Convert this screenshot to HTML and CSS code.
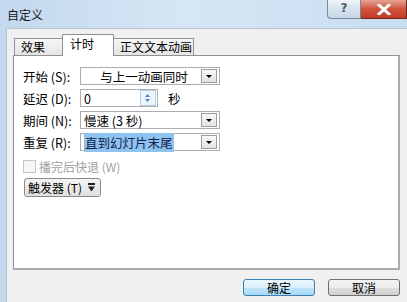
FILE: index.html
```html
<!DOCTYPE html>
<html lang="zh-CN">
<head>
    <meta charset="UTF-8">
    <title>自定义</title>
    <link rel="stylesheet" href="styles.css">
</head>
<body>
    <div class="window">
        <div class="titlebar">
            <span class="title">自定义</span>
            <div class="caption-btns">
                <div class="cap-help">?</div>
                <div class="cap-close">
                    <svg width="14" height="11" viewBox="0 0 14 11"><path d="M2 1 L12 10 M12 1 L2 10" stroke="#fff" stroke-width="3" stroke-linecap="square"/></svg>
                </div>
            </div>
        </div>
        <div class="client">
            <div class="tabs">
                <div class="tab t1">效果</div>
                <div class="tab active">计时</div>
                <div class="tab t3">正文文本动画</div>
            </div>
            <div class="panel">
                <div class="form">
                    <label>开始 (S):</label>
                    <div class="combo">
                        <span class="val center">与上一动画同时</span>
                        <span class="drop"><i></i></span>
                    </div>

                    <label>延迟 (D):</label>
                    <div class="spin-row">
                        <div class="spin">
                            <span class="val">0</span>
                            <span class="arrows">
                                <svg width="13" height="14" viewBox="0 0 13 14"><path d="M4 6 L6.5 3 L9 6 Z M4 8 L6.5 11 L9 8 Z" fill="#4f86c6"/></svg>
                            </span>
                        </div>
                        <span class="unit">秒</span>
                    </div>

                    <label>期间 (N):</label>
                    <div class="combo">
                        <span class="val">慢速 (3 秒)</span>
                        <span class="drop"><i></i></span>
                    </div>

                    <label>重复 (R):</label>
                    <div class="combo">
                        <span class="val"><span class="sel">直到幻灯片末尾</span></span>
                        <span class="drop"><i></i></span>
                    </div>
                </div>
                <div class="check">
                    <span class="box"></span>
                    <span>播完后快退 (W)</span>
                </div>
                <div class="trigger">
                    <span>触发器 (T)</span>
                    <svg width="7" height="9" viewBox="0 0 7 9"><path d="M0 0 H7 V2 H0 Z M0 3.5 H7 L3.5 8.5 Z" fill="#222"/></svg>
                </div>
            </div>
            <div class="buttons">
                <div class="btn default">确定</div>
                <div class="btn">取消</div>
            </div>
        </div>
    </div>
</body>
</html>
```

FILE: styles.css
```css
body {
    margin: 0;
    font-family: "Noto Sans CJK SC", "Liberation Sans", sans-serif;
    font-size: 12px;
    color: #000;
    overflow: hidden;
}

.window {
    width: 407px;
    height: 302px;
    display: flex;
    flex-direction: column;
    background: linear-gradient(90deg, #c3d8ee 0%, #d6e6f5 45%, #c9ddf0 100%);
}

.titlebar {
    height: 28px;
    display: flex;
    justify-content: space-between;
    align-items: flex-start;
}

.title {
    margin: 6px 0 0 7px;
    font-size: 12px;
    color: #1a1a1a;
}

.caption-btns {
    display: flex;
}

.cap-help {
    width: 32px;
    height: 18px;
    border: 1px solid #7a8796;
    border-top: none;
    border-radius: 0 0 0 4px;
    background: linear-gradient(#f2f6fb, #d6e2ee 50%, #c6d6e6);
    color: #4d5a69;
    font-family: "DejaVu Sans", sans-serif;
    font-size: 12px;
    font-weight: bold;
    text-align: center;
    line-height: 17px;
}

.cap-close {
    width: 45px;
    height: 18px;
    border: 1px solid #6e2a23;
    border-top: none;
    border-left: none;
    background: linear-gradient(#e7a493, #d0523e 50%, #c23a26);
    display: flex;
    align-items: center;
    justify-content: center;
}

.client {
    flex: 1;
    margin-left: 6px;
    border-left: 1px solid #b5c3d2;
    border-top: 1px solid #b8c6d6;
    background: #f0f0f0;
    padding: 5px 0 0 6px;
    display: flex;
    flex-direction: column;
}

.tabs {
    display: flex;
    align-items: flex-end;
    height: 21px;
    padding-left: 1px;
}

.tab {
    height: 16px;
    border: 1px solid #8e9298;
    border-bottom: none;
    background: linear-gradient(#f6f6f6, #e5e5e5);
    font-size: 12px;
    line-height: 16px;
    padding-left: 6px;
}

.t1 {
    width: 41px;
    border-right: none;
}

.t3 {
    width: 73px;
    border-left: none;
}

.tab.active {
    width: 43px;
    height: 21px;
    margin-bottom: -1px;
    background: #fff;
    padding-left: 7px;
    line-height: 18px;
    position: relative;
    z-index: 1;
}

.panel {
    width: 375px;
    height: 201px;
    background: #fff;
    border: 1px solid #8e9298;
    border-right: 2px solid #a9abb0;
    border-bottom: 2px solid #a9abb0;
    padding: 11px 0 0 9px;
}

.form {
    display: grid;
    grid-template-columns: 57px 140px;
    grid-auto-rows: 18px;
    row-gap: 4px;
    align-items: center;
}

.form label {
    font-size: 12.5px;
}

.combo, .spin {
    height: 18px;
    box-sizing: border-box;
    border: 1px solid #abadb3;
    display: flex;
    align-items: center;
    justify-content: space-between;
}

.spin-row {
    display: flex;
    align-items: center;
}

.spin {
    width: 78px;
}

.val {
    flex: 1;
    padding-left: 3px;
    font-size: 12.5px;
    white-space: nowrap;
}

.val.center {
    text-align: center;
    padding-left: 6px;
}

.sel {
    background: #8ec2ef;
    color: #10204a;
    padding: 0 1px;
}

.drop {
    width: 14px;
    height: 12px;
    margin-right: 2px;
    border: 1px solid #9a9da3;
    background: linear-gradient(#fafafa, #e2e2e2);
    display: flex;
    align-items: center;
    justify-content: center;
}

.drop i {
    width: 0;
    height: 0;
    border-left: 3px solid transparent;
    border-right: 3px solid transparent;
    border-top: 3px solid #000;
}

.arrows {
    width: 14px;
    height: 14px;
    margin-right: 1px;
    border: 1px solid #b8cde4;
    background: #eef4fb;
    display: flex;
}

.unit {
    padding-left: 10px;
    font-size: 12.5px;
}

.check {
    display: flex;
    align-items: center;
    gap: 3px;
    margin-top: 8px;
    color: #a0a0a0;
    font-size: 12px;
    height: 14px;
}

.check .box {
    width: 11px;
    height: 11px;
    border: 1px solid #c6c6c6;
    background: #f6f6f6;
}

.trigger {
    display: flex;
    align-items: center;
    gap: 6px;
    width: 77px;
    height: 19px;
    margin: 5px 0 0 1px;
    padding-left: 3px;
    box-sizing: border-box;
    border: 1px solid #8a8a8a;
    border-radius: 3px;
    background: linear-gradient(#f4f4f4, #e0e0e0);
    font-size: 12px;
    white-space: nowrap;
}

.buttons {
    display: flex;
    justify-content: flex-end;
    gap: 13px;
    padding: 9px 0 0;
    margin-right: 7px;
}

.btn {
    width: 70px;
    height: 15px;
    border: 1px solid #707070;
    border-radius: 3px;
    background: linear-gradient(#f2f2f2, #ebebeb 50%, #dddddd 51%, #cfcfcf);
    text-align: center;
    font-size: 12px;
    line-height: 15px;
}

.btn.default {
    border-color: #3c7fb1;
    background: linear-gradient(#eaf6fd, #d9f0fc 50%, #bee6fd 51%, #a7d9f5);
}
```
